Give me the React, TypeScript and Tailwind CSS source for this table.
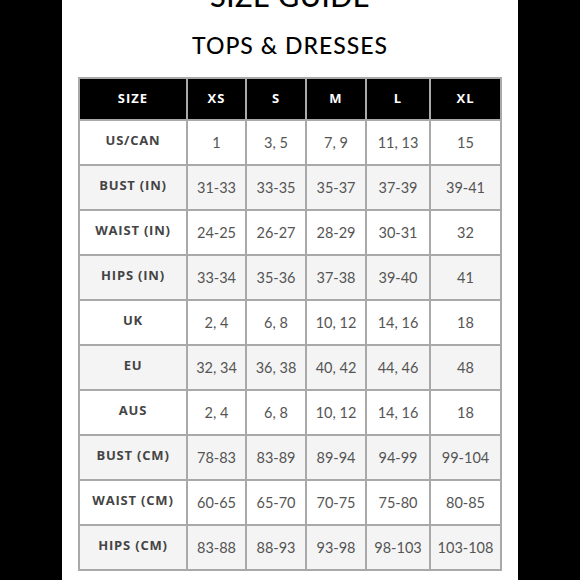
import React from 'react';

const sizes = ['XS', 'S', 'M', 'L', 'XL'];

const rows: { label: string; values: string[] }[] = [
  { label: 'US/CAN', values: ['1', '3, 5', '7, 9', '11, 13', '15'] },
  { label: 'BUST (IN)', values: ['31-33', '33-35', '35-37', '37-39', '39-41'] },
  { label: 'WAIST (IN)', values: ['24-25', '26-27', '28-29', '30-31', '32'] },
  { label: 'HIPS (IN)', values: ['33-34', '35-36', '37-38', '39-40', '41'] },
  { label: 'UK', values: ['2, 4', '6, 8', '10, 12', '14, 16', '18'] },
  { label: 'EU', values: ['32, 34', '36, 38', '40, 42', '44, 46', '48'] },
  { label: 'AUS', values: ['2, 4', '6, 8', '10, 12', '14, 16', '18'] },
  { label: 'BUST (CM)', values: ['78-83', '83-89', '89-94', '94-99', '99-104'] },
  { label: 'WAIST (CM)', values: ['60-65', '65-70', '70-75', '75-80', '80-85'] },
  { label: 'HIPS (CM)', values: ['83-88', '88-93', '93-98', '98-103', '103-108'] },
];

const cell = 'flex items-center justify-center border-r-2 border-b-2 border-[#a9a9a9]';

export default function App() {
  return (
    <div className="w-[580px] h-[580px] flex bg-black overflow-hidden">
      <div className="w-[62px] flex-none bg-black" />
      <div className="w-[456px] flex-none bg-white flex flex-col items-center overflow-hidden">
        <h1 className="mt-[-18px] text-[29px] leading-[28px] font-medium tracking-[0.5px] text-black" style={{ fontFamily: 'Lato, sans-serif' }}>
          SIZE GUIDE
        </h1>
        <h2 className="mt-[23px] text-[23px] leading-[24px] font-medium tracking-[1px] text-black" style={{ fontFamily: 'Lato, sans-serif' }}>
          TOPS &amp; DRESSES
        </h2>
        <div className="mt-[20px] grid grid-cols-[108px_59px_60px_60px_64px_71px] grid-rows-[42px] auto-rows-[45px] border-t-2 border-l-2 border-[#a9a9a9]" style={{ fontFamily: '"Open Sans", sans-serif' }}>
          <div className={`${cell} bg-black text-white text-[13px] font-bold tracking-[1px]`}>SIZE</div>
          {sizes.map(s => (
            <div key={s} className={`${cell} bg-black text-white text-[13px] font-bold tracking-[1px]`}>{s}</div>
          ))}
          {rows.map((r, i) => (
            <React.Fragment key={r.label}>
              <div className={`${cell} ${i % 2 ? 'bg-[#f4f4f4]' : 'bg-white'} text-[#444] text-[13px] font-bold tracking-[0.8px] pb-[3px]`}>{r.label}</div>
              {r.values.map((v, j) => (
                <div key={j} className={`${cell} ${i % 2 ? 'bg-[#f4f4f4]' : 'bg-white'} text-[#555] text-[14.5px]`} style={{ fontFamily: 'Lato, sans-serif' }}>{v}</div>
              ))}
            </React.Fragment>
          ))}
        </div>
      </div>
      <div className="w-[62px] flex-none bg-black" />
    </div>
  );
}
